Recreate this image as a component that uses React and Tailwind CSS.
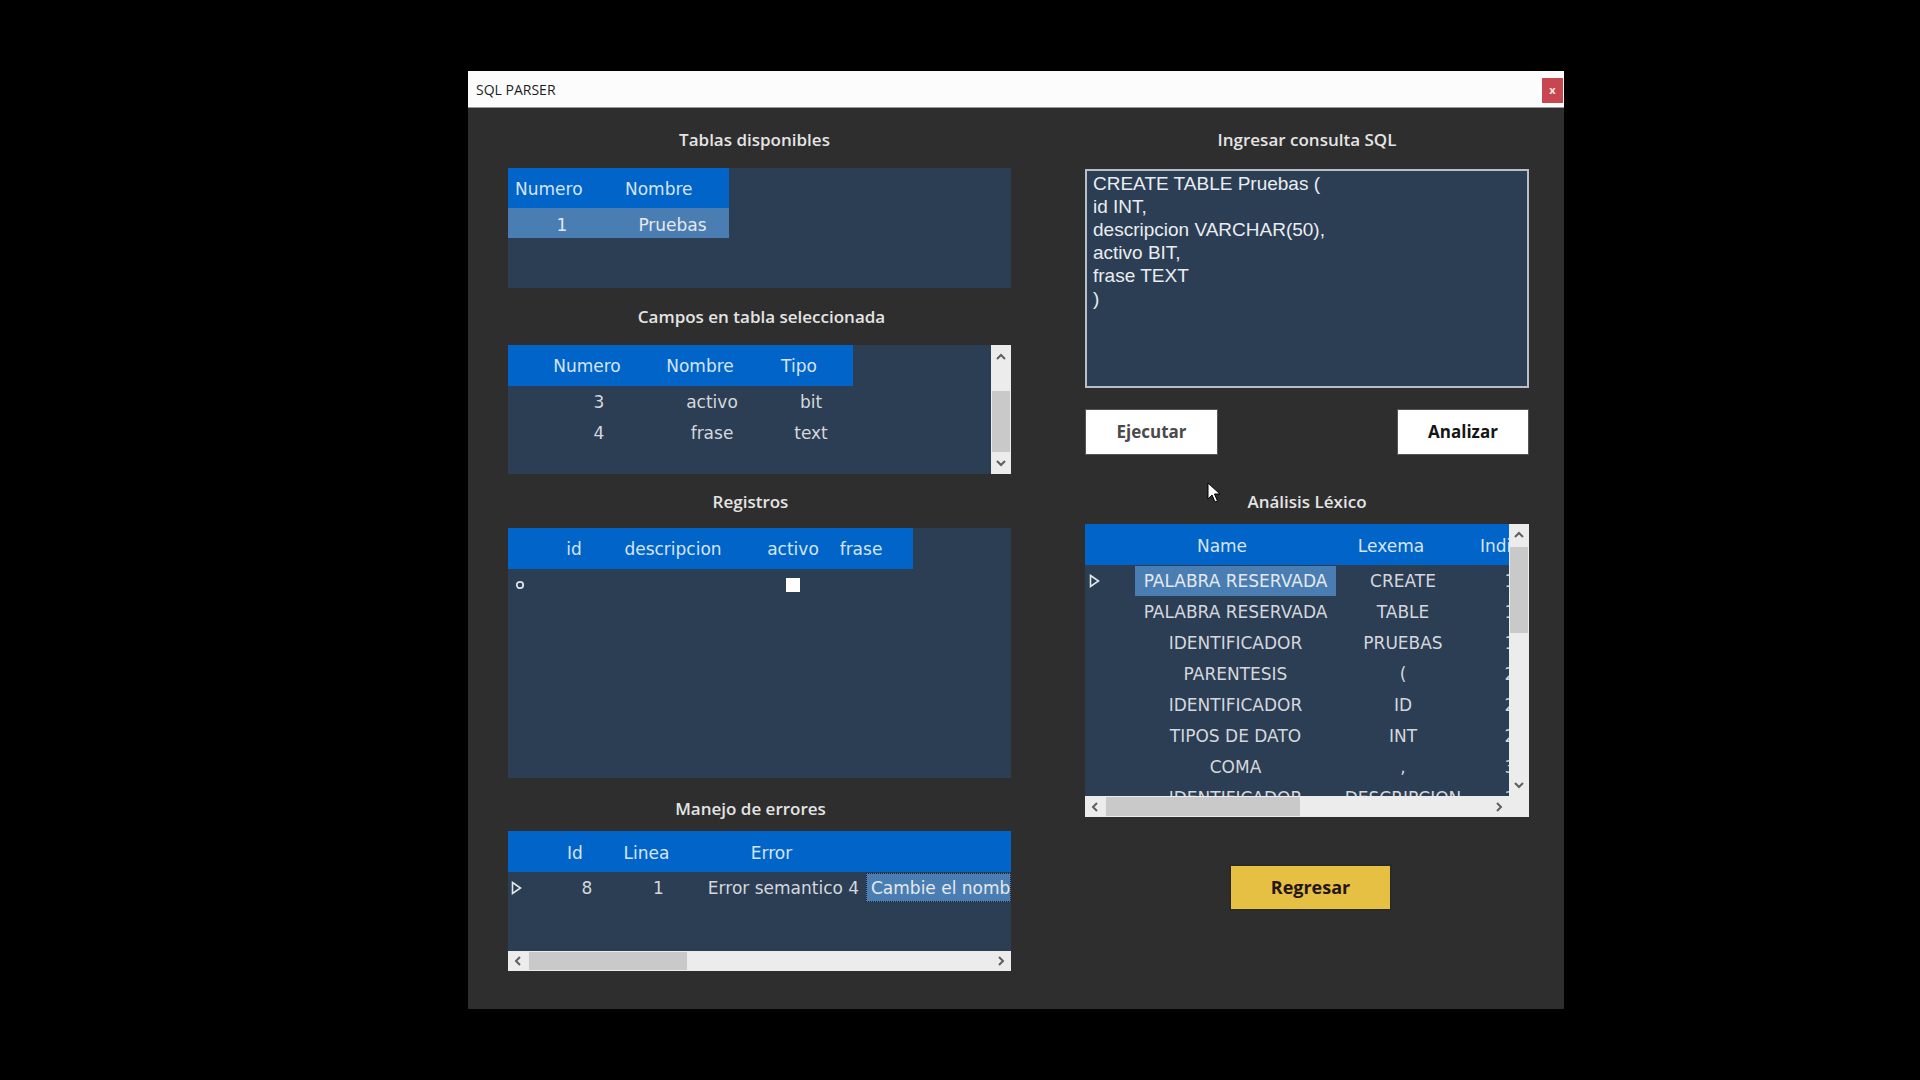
import React from 'react';

const cellFont = "font-['DejaVu_Sans',sans-serif] text-[17px]";
const headFont = "font-['Open_Sans',sans-serif] font-semibold text-[17px] leading-[22px] text-[#e4e4e4] text-center";

function Chevron({ dir }) {
  const pts = {
    up: '1,7 5,3 9,7',
    down: '1,3 5,7 9,3',
    left: '7,1 3,5 7,9',
    right: '3,1 7,5 3,9',
  }[dir];
  return (
    <svg width="10" height="10" viewBox="0 0 10 10">
      <polyline points={pts} fill="none" stroke="#5f5f5f" strokeWidth="2" />
    </svg>
  );
}

function RowArrow() {
  return (
    <svg width="11" height="14" viewBox="0 0 11 14">
      <polygon points="1.5,1.5 9.5,7 1.5,12.5" fill="none" stroke="#e2e6ea" strokeWidth="1.6" />
    </svg>
  );
}

function Heading({ children, className }) {
  return <div className={`${headFont} h-[22px] ${className}`}>{children}</div>;
}

// Tablas disponibles
function TablasTable() {
  return (
    <div className={`h-[120px] bg-[#2c3e54] ${cellFont} mt-[17px]`}>
      <div className="w-[221px]">
        <div className="h-[40px] pt-[4px] bg-[#0064c8] flex items-center text-[#d5e5f7]">
          <span className="w-[117px] pl-[7px]">Numero</span>
          <span>Nombre</span>
        </div>
        <div className="h-[30px] pt-[5px] bg-[#4a7db1] flex items-center text-[#e4e9ef]">
          <span className="w-[108px] text-center">1</span>
          <span className="flex-1 text-center">Pruebas</span>
        </div>
      </div>
    </div>
  );
}

function VScroll({ upH, thumb, downH }) {
  return (
    <div className="w-[20px] shrink-0 h-full bg-[#ececec] flex flex-col">
      <div className={`${upH} flex items-center justify-center`}>
        <Chevron dir="up" />
      </div>
      <div className="flex-1 px-[1px]">
        <div className={`${thumb} bg-[#c9c9c9]`} />
      </div>
      <div className={`${downH} flex items-center justify-center`}>
        <Chevron dir="down" />
      </div>
    </div>
  );
}

// Campos en tabla seleccionada
function CamposTable() {
  const rows = [
    ['3', 'activo', 'bit'],
    ['4', 'frase', 'text'],
  ];
  return (
    <div className={`h-[129px] bg-[#2c3e54] ${cellFont} mt-[17px] flex`}>
      <div className="w-[483px]">
        <div className="w-[345px] h-[41px] pt-[3px] bg-[#0064c8] flex items-center text-[#d5e5f7] pl-[30px]">
          <span className="w-[98px] text-center">Numero</span>
          <span className="w-[128px] text-center">Nombre</span>
          <span className="w-[70px] text-center">Tipo</span>
        </div>
        {rows.map((r) => (
          <div key={r[0]} className="h-[31px] pt-[2px] flex items-center text-[#d4d8de] pl-[42px]">
            <span className="w-[98px] text-center">{r[0]}</span>
            <span className="w-[128px] text-center">{r[1]}</span>
            <span className="w-[70px] text-center">{r[2]}</span>
          </div>
        ))}
      </div>
      <VScroll upH="h-[24px]" thumb="mt-[22px] h-[61px]" downH="h-[22px]" />
    </div>
  );
}

// Registros
function RegistrosTable() {
  return (
    <div className={`h-[250px] bg-[#2c3e54] ${cellFont} mt-[15px]`}>
      <div className="w-[405px] h-[41px] pt-[3px] bg-[#0064c8] flex items-center text-[#d5e5f7] pl-[40px] whitespace-nowrap">
        <span className="w-[52px] text-center">id</span>
        <span className="w-[146px] text-center">descripcion</span>
        <span className="w-[94px] text-center">activo</span>
        <span className="w-[42px] flex justify-center">frase</span>
      </div>
      <div className="h-[31px] flex items-center">
        <div className="w-[40px] pl-[7px] flex items-center">
          <svg width="10" height="10" viewBox="0 0 10 10">
            <circle cx="5" cy="5" r="3.2" fill="none" stroke="#dfe3e8" strokeWidth="1.8" />
          </svg>
        </div>
        <span className="w-[52px]" />
        <span className="w-[146px]" />
        <span className="w-[94px] flex justify-center">
          <span className="w-[14px] h-[14px] bg-white" />
        </span>
      </div>
    </div>
  );
}

function HScroll({ thumb, corner }) {
  return (
    <div className="h-full bg-[#ececec] flex">
      <div className="w-[20px] flex items-center justify-center">
        <Chevron dir="left" />
      </div>
      <div className="flex-1 py-[1px]">
        <div className={`${thumb} h-full bg-[#c9c9c9]`} />
      </div>
      <div className="w-[20px] flex items-center justify-center">
        <Chevron dir="right" />
      </div>
      {corner && <div className="w-[20px]" />}
    </div>
  );
}

// Manejo de errores
function ErroresTable() {
  return (
    <div className={`h-[140px] bg-[#2c3e54] ${cellFont} mt-[11px] flex flex-col`}>
      <div className="h-[41px] pt-[4px] bg-[#0064c8] flex items-center text-[#d5e5f7] pl-[40px]">
        <span className="w-[54px] text-center">Id</span>
        <span className="w-[89px] text-center">Linea</span>
        <span className="w-[161px] text-center">Error</span>
      </div>
      <div className="h-[31px] flex items-center text-[#d4d8de] whitespace-nowrap">
        <div className="w-[52px] shrink-0 pl-[3px] flex items-center">
          <RowArrow />
        </div>
        <span className="w-[54px] shrink-0 text-center pt-[2px]">8</span>
        <span className="w-[89px] shrink-0 text-center pt-[2px]">1</span>
        <span className="w-[161px] shrink-0 text-center pt-[2px]">Error semantico 4</span>
        <div className="ml-[2px] min-w-0 flex-1 h-[29px] pt-[2px] bg-[#4a7db1] border border-dotted border-[#1a1a1a] overflow-hidden pl-[4px] flex items-center text-[#e4e9ef]">
          Cambie el nombre de la tabla
        </div>
      </div>
      <div className="flex-1" />
      <div className="h-[20px]">
        <HScroll thumb="ml-[1px] w-[158px]" />
      </div>
    </div>
  );
}

// Análisis Léxico
function LexicoTable() {
  const rows = [
    ['PALABRA RESERVADA', 'CREATE', '1'],
    ['PALABRA RESERVADA', 'TABLE', '1'],
    ['IDENTIFICADOR', 'PRUEBAS', '1'],
    ['PARENTESIS', '(', '2'],
    ['IDENTIFICADOR', 'ID', '2'],
    ['TIPOS DE DATO', 'INT', '2'],
    ['COMA', ',', '3'],
    ['IDENTIFICADOR', 'DESCRIPCION', '3'],
  ];
  return (
    <div className={`h-[293px] bg-[#2c3e54] ${cellFont} mt-[11px] flex flex-col`}>
      <div className="h-[272px] flex">
        <div className="w-[424px] shrink-0 overflow-hidden">
          <div className="h-[41px] pt-[4px] bg-[#0064c8] flex items-center text-[#d5e5f7] whitespace-nowrap">
            <span className="w-[37px] shrink-0" />
            <span className="w-[200px] shrink-0 text-center">Name</span>
            <span className="w-[138px] shrink-0 text-center">Lexema</span>
            <span className="shrink-0 pl-[20px]">Indice</span>
          </div>
          {rows.map((r, i) => (
            <div key={i} className="h-[31px] flex items-center text-[#d4d8de] whitespace-nowrap">
              <div className="w-[50px] shrink-0 pl-[4px] flex items-center">{i === 0 && <RowArrow />}</div>
              <span className={`w-[201px] shrink-0 h-[30px] pt-[2px] flex items-center justify-center ${i === 0 ? 'bg-[#4a7db1] text-[#e4e9ef]' : ''}`}>
                {r[0]}
              </span>
              <span className="w-[134px] shrink-0 text-center pt-[2px]">{r[1]}</span>
              <span className="w-[80px] shrink-0 text-center pt-[2px]">{r[2]}</span>
            </div>
          ))}
        </div>
        <VScroll upH="h-[22px]" thumb="mt-[1px] h-[86px]" downH="h-[22px]" />
      </div>
      <div className="h-[21px]">
        <HScroll thumb="ml-[1px] w-[194px]" corner />
      </div>
    </div>
  );
}

function Cursor() {
  return (
    <svg className="absolute left-[122px] top-[374px]" width="14" height="22" viewBox="0 0 14 22">
      <path d="M1 1 L1 17 L5 13 L8 20 L10.5 19 L7.5 12 L13 12 Z" fill="#ffffff" stroke="#000000" strokeWidth="1" strokeLinejoin="round" />
    </svg>
  );
}

export default function App() {
  return (
    <div className="w-[1920px] h-[1080px] bg-black overflow-hidden pt-[71px] pl-[468px]">
      <div className="w-[1096px] h-[938px] flex flex-col bg-[#2e2e2e]">
        {/* title bar */}
        <div className="h-[37px] bg-[#fcfcfc] border-b border-[#9a9a9a] flex pl-[8px] pr-[1px]">
          <span className="self-center font-['Open_Sans',sans-serif] text-[14px] text-[#1c1c1c]">SQL PARSER</span>
          <div className="ml-auto mt-[7px] w-[21px] h-[25px] bg-[#c8464f] flex items-center justify-center font-['Open_Sans',sans-serif] font-bold text-[11px] text-[#f3e6e6]">
            x
          </div>
        </div>

        <div className="flex-1 flex pl-[40px]">
          {/* left column */}
          <div className="w-[503px] flex flex-col">
            <Heading className="mt-[21px] pr-[10px]">Tablas disponibles</Heading>
            <TablasTable />
            <Heading className="mt-[18px] pl-[4px]">Campos en tabla seleccionada</Heading>
            <CamposTable />
            <Heading className="mt-[17px] pr-[18px]">Registros</Heading>
            <RegistrosTable />
            <Heading className="mt-[20px] pr-[18px]">Manejo de errores</Heading>
            <ErroresTable />
          </div>

          {/* right column */}
          <div className="relative w-[444px] ml-[74px] flex flex-col">
            <Heading className="mt-[21px]">Ingresar consulta SQL</Heading>
            <div className="mt-[18px] h-[219px] bg-[#2c3e54] border-2 border-[#b9bfc7] pl-[6px] pt-[1px] font-['Liberation_Sans',Arial,sans-serif] text-[19px] leading-[23px] text-[#e9edf1] whitespace-pre">
              {'CREATE TABLE Pruebas (\nid INT,\ndescripcion VARCHAR(50),\nactivo BIT,\nfrase TEXT\n)'}
            </div>
            <div className="mt-[21px] h-[46px] flex justify-between font-['Open_Sans',sans-serif] font-bold text-[17px]">
              <button className="w-[133px] bg-white border border-[#555] text-[#4a4a4a]">Ejecutar</button>
              <button className="w-[132px] bg-white border border-[#555] text-[#151515]">Analizar</button>
            </div>
            <Heading className="mt-[36px]">Análisis Léxico</Heading>
            <LexicoTable />
            <button className="mt-[47px] ml-[144px] w-[163px] h-[47px] bg-[#e6c043] border-2 border-[#2a2a2a] font-['Open_Sans',sans-serif] font-bold text-[18px] text-[#24161a]">
              Regresar
            </button>
            <Cursor />
          </div>
        </div>
      </div>
    </div>
  );
}
